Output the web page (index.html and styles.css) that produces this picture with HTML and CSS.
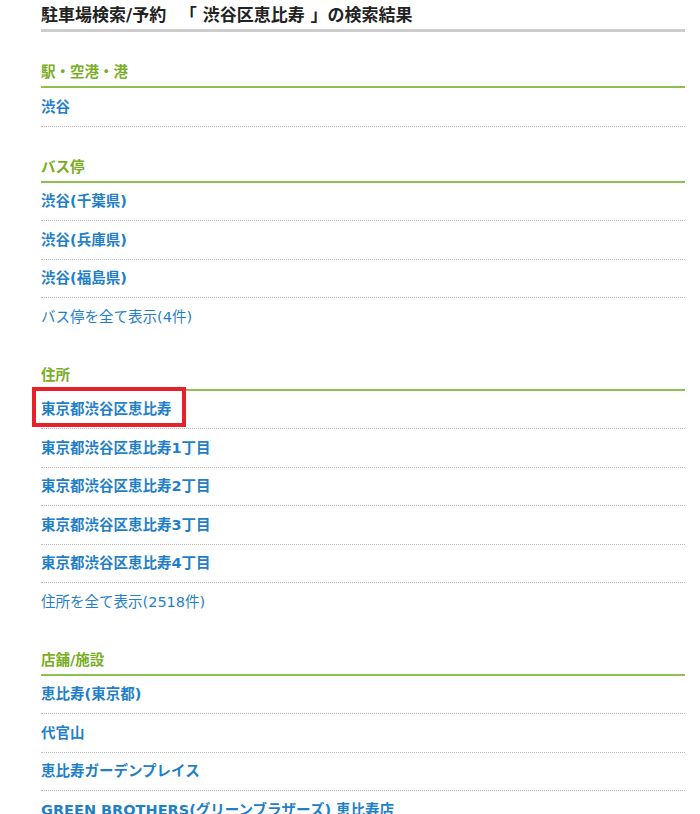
FILE: index.html
```html
<!DOCTYPE html>
<html lang="ja">

<head>
    <meta charset="UTF-8">
    <meta name="viewport" content="width=device-width, initial-scale=1.0">
    <title>駐車場検索/予約 検索結果</title>
    <link rel="stylesheet" href="styles.css">
</head>

<body>
    <div class="page">
        <h1 class="pageTitle">駐車場検索/予約　<span class="keyword">「 渋谷区恵比寿 」</span>の検索結果</h1>

        <section class="group">
            <h2 class="groupTitle">駅・空港・港</h2>
            <ul class="resultList">
                <li><a href="#">渋谷</a></li>
            </ul>
        </section>

        <section class="group">
            <h2 class="groupTitle">バス停</h2>
            <ul class="resultList">
                <li><a href="#">渋谷(千葉県)</a></li>
                <li><a href="#">渋谷(兵庫県)</a></li>
                <li><a href="#">渋谷(福島県)</a></li>
                <li class="more"><a href="#">バス停を全て表示(4件)</a></li>
            </ul>
        </section>

        <section class="group">
            <h2 class="groupTitle">住所</h2>
            <ul class="resultList">
                <li class="marked"><a href="#">東京都渋谷区恵比寿</a></li>
                <li><a href="#">東京都渋谷区恵比寿1丁目</a></li>
                <li><a href="#">東京都渋谷区恵比寿2丁目</a></li>
                <li><a href="#">東京都渋谷区恵比寿3丁目</a></li>
                <li><a href="#">東京都渋谷区恵比寿4丁目</a></li>
                <li class="more"><a href="#">住所を全て表示(2518件)</a></li>
            </ul>
        </section>

        <section class="group">
            <h2 class="groupTitle">店舗/施設</h2>
            <ul class="resultList">
                <li><a href="#">恵比寿(東京都)</a></li>
                <li><a href="#">代官山</a></li>
                <li><a href="#">恵比寿ガーデンプレイス</a></li>
                <li><a href="#">GREEN BROTHERS(グリーンブラザーズ) 恵比寿店</a></li>
            </ul>
        </section>
    </div>
</body>

</html>
```

FILE: styles.css
```css
body {
    margin: 0;
    background-color: #fff;
    font-family: "DejaVu Sans", "Noto Sans CJK JP", sans-serif;
    color: #222;
}

.page {
    width: 644px;
    margin-left: 41px;
}

.pageTitle {
    margin: 0;
    padding: 3px 0 2px;
    font-size: 17px;
    line-height: 24px;
    font-weight: bold;
    color: #222;
    border-bottom: 3px solid #cccccc;
}

.pageTitle .keyword {
    margin-left: 5px;
}

.group {
    margin-top: 30px;
}

.groupTitle {
    margin: 0;
    padding-bottom: 4px;
    font-size: 14.5px;
    line-height: 20px;
    font-weight: bold;
    color: #78ad24;
    border-bottom: 2px solid #8cc152;
}

.resultList {
    list-style: none;
    margin: 0;
    padding: 0;
}

.resultList li {
    position: relative;
    border-bottom: 1px dotted #bbbbbb;
}

.resultList a {
    display: block;
    padding: 8.5px 0 9px;
    font-size: 14.5px;
    line-height: 20px;
    font-weight: bold;
    color: #1f7fc8;
    text-decoration: none;
}

.resultList li.more {
    border-bottom: none;
}

.resultList li.more a {
    padding: 8.5px 0 8px;
    font-weight: normal;
}

/* red marker drawn over the first address row */
.resultList li.marked::after {
    content: "";
    position: absolute;
    left: -9px;
    top: -4px;
    width: 154px;
    height: 40px;
    box-sizing: border-box;
    border: 4px solid #e8202b;
}
```
